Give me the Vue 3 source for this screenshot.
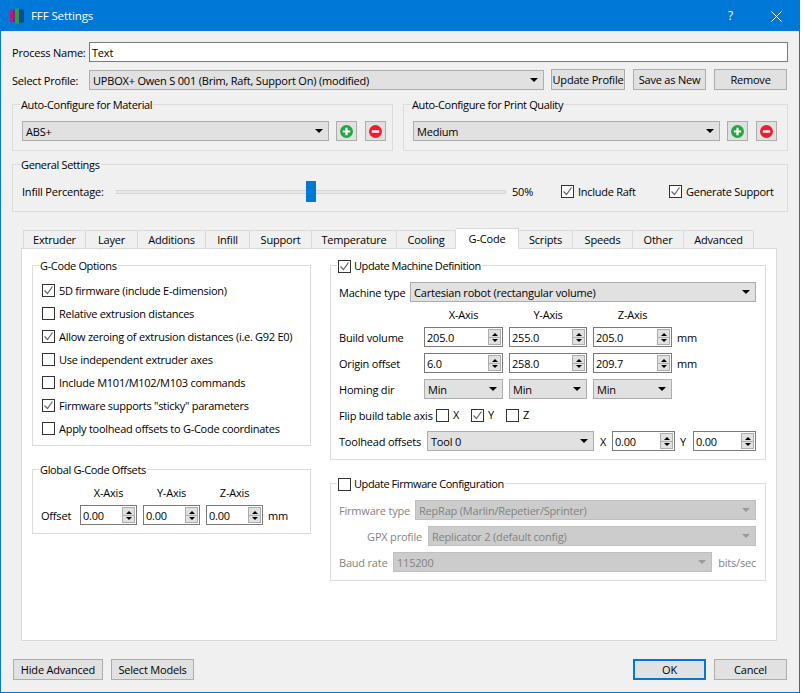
<script setup>
const tabs = ['Extruder', 'Layer', 'Additions', 'Infill', 'Support', 'Temperature', 'Cooling', 'G-Code', 'Scripts', 'Speeds', 'Other', 'Advanced']
const activeTab = 'G-Code'

const gcodeOptions = [
  { label: '5D firmware (include E-dimension)', checked: true },
  { label: 'Relative extrusion distances', checked: false },
  { label: 'Allow zeroing of extrusion distances (i.e. G92 E0)', checked: true },
  { label: 'Use independent extruder axes', checked: false },
  { label: 'Include M101/M102/M103 commands', checked: false },
  { label: 'Firmware supports "sticky" parameters', checked: true },
  { label: 'Apply toolhead offsets to G-Code coordinates', checked: false },
]

const axes = ['X-Axis', 'Y-Axis', 'Z-Axis']
const globalOffsets = ['0.00', '0.00', '0.00']
const buildVolume = ['205.0', '255.0', '205.0']
const originOffset = ['6.0', '258.0', '209.7']
const flipAxes = [
  { label: 'X', checked: false },
  { label: 'Y', checked: true },
  { label: 'Z', checked: false },
]
</script>

<template>
  <div class="window">
    <header class="titlebar">
      <svg class="logo" width="15" height="16" viewBox="0 0 15 16">
        <rect x="0" y="2" width="4" height="12" rx="1.5" fill="#c0187a" />
        <rect x="3" y="2" width="3" height="12" fill="#5b2fa0" />
        <rect x="5" y="0" width="4" height="16" rx="2" fill="#2fa040" />
        <rect x="9" y="1" width="5" height="14" rx="2" fill="#124a96" />
      </svg>
      <span class="title">FFF Settings</span>
      <span class="help">?</span>
      <svg class="close" width="11" height="11" viewBox="0 0 11 11">
        <path d="M0.5 0.5L10.5 10.5M10.5 0.5L0.5 10.5" stroke="#fff" stroke-width="1" fill="none" />
      </svg>
    </header>

    <main class="body">
      <div class="row name-row">
        <label class="row-label">Process Name:</label>
        <div class="line-edit">Text</div>
      </div>

      <div class="row profile-row">
        <label class="row-label">Select Profile:</label>
        <div class="combo profile-combo">
          <span>UPBOX+ Owen S 001 (Brim, Raft, Support On) (modified)</span><i class="arrow"></i>
        </div>
        <button class="btn update-btn">Update Profile</button>
        <button class="btn save-btn">Save as New</button>
        <button class="btn remove-btn">Remove</button>
      </div>

      <div class="auto-groups">
        <fieldset class="group top-group material-group">
          <legend>Auto-Configure for Material</legend>
          <div class="auto-row">
            <div class="combo"><span>ABS+</span><i class="arrow"></i></div>
            <button class="btn icon-btn add-btn">
              <svg width="13" height="13" viewBox="0 0 14 14"><circle cx="7" cy="7" r="7" fill="#22a83f" /><path d="M7 3v8M3 7h8" stroke="#fff" stroke-width="2.4" /></svg>
            </button>
            <button class="btn icon-btn">
              <svg width="13" height="13" viewBox="0 0 14 14"><circle cx="7" cy="7" r="7" fill="#ed1c2e" /><path d="M3 7h8" stroke="#fff" stroke-width="2.6" /></svg>
            </button>
          </div>
        </fieldset>
        <fieldset class="group top-group quality-group">
          <legend>Auto-Configure for Print Quality</legend>
          <div class="auto-row">
            <div class="combo"><span>Medium</span><i class="arrow"></i></div>
            <button class="btn icon-btn add-btn">
              <svg width="13" height="13" viewBox="0 0 14 14"><circle cx="7" cy="7" r="7" fill="#22a83f" /><path d="M7 3v8M3 7h8" stroke="#fff" stroke-width="2.4" /></svg>
            </button>
            <button class="btn icon-btn">
              <svg width="13" height="13" viewBox="0 0 14 14"><circle cx="7" cy="7" r="7" fill="#ed1c2e" /><path d="M3 7h8" stroke="#fff" stroke-width="2.6" /></svg>
            </button>
          </div>
        </fieldset>
      </div>

      <fieldset class="group top-group general-group">
        <legend>General Settings</legend>
        <div class="general-row">
          <span class="infill-label">Infill Percentage:</span>
          <div class="slider"><div class="track"></div><div class="handle"></div></div>
          <span class="percent">50%</span>
          <label class="check raft-check">
            <span class="box"><svg width="11" height="11" viewBox="0 0 11 11"><path d="M1.5 5.5L4.5 8.5L9.5 1.5" stroke="#666" stroke-width="1.2" fill="none" /></svg></span>Include Raft
          </label>
          <label class="check">
            <span class="box"><svg width="11" height="11" viewBox="0 0 11 11"><path d="M1.5 5.5L4.5 8.5L9.5 1.5" stroke="#666" stroke-width="1.2" fill="none" /></svg></span>Generate Support
          </label>
        </div>
      </fieldset>

      <nav class="tabs">
        <div v-for="tab in tabs" :key="tab" class="tab" :class="{ active: tab === activeTab }">{{ tab }}</div>
      </nav>

      <section class="pane">
        <div class="left-col">
          <fieldset class="group options-group">
            <legend>G-Code Options</legend>
            <label v-for="opt in gcodeOptions" :key="opt.label" class="check option">
              <span class="box">
                <svg v-if="opt.checked" width="11" height="11" viewBox="0 0 11 11"><path d="M1.5 5.5L4.5 8.5L9.5 1.5" stroke="#666" stroke-width="1.2" fill="none" /></svg>
              </span>{{ opt.label }}
            </label>
          </fieldset>

          <fieldset class="group offsets-group">
            <legend>Global G-Code Offsets</legend>
            <div class="offsets-grid">
              <span></span>
              <span v-for="axis in axes" :key="axis" class="axis">{{ axis }}</span>
              <span></span>
              <span>Offset</span>
              <div v-for="(val, i) in globalOffsets" :key="i" class="spin">
                <span class="spin-value">{{ val }}</span>
                <div class="spin-btns"><i class="up"></i><i class="down"></i></div>
              </div>
              <span class="unit">mm</span>
            </div>
          </fieldset>
        </div>

        <div class="right-col">
          <fieldset class="group machine-group">
            <legend>
              <label class="check">
                <span class="box"><svg width="11" height="11" viewBox="0 0 11 11"><path d="M1.5 5.5L4.5 8.5L9.5 1.5" stroke="#666" stroke-width="1.2" fill="none" /></svg></span>Update Machine Definition
              </label>
            </legend>
            <div class="row machine-type">
              <span class="type-label">Machine type</span>
              <div class="combo"><span>Cartesian robot (rectangular volume)</span><i class="arrow"></i></div>
            </div>

            <div class="machine-grid">
              <span></span>
              <span v-for="axis in axes" :key="axis" class="axis">{{ axis }}</span>
              <span></span>

              <span>Build volume</span>
              <div v-for="(val, i) in buildVolume" :key="i" class="spin">
                <span class="spin-value">{{ val }}</span>
                <div class="spin-btns"><i class="up"></i><i class="down"></i></div>
              </div>
              <span class="unit">mm</span>

              <span>Origin offset</span>
              <div v-for="(val, i) in originOffset" :key="i" class="spin">
                <span class="spin-value">{{ val }}</span>
                <div class="spin-btns"><i class="up"></i><i class="down"></i></div>
              </div>
              <span class="unit">mm</span>

              <span>Homing dir</span>
              <div v-for="axis in axes" :key="axis" class="combo"><span>Min</span><i class="arrow"></i></div>
              <span></span>
            </div>

            <div class="flip-row">
              <span class="flip-label">Flip build table axis</span>
              <label v-for="axis in flipAxes" :key="axis.label" class="check flip-check">
                <span class="box">
                  <svg v-if="axis.checked" width="11" height="11" viewBox="0 0 11 11"><path d="M1.5 5.5L4.5 8.5L9.5 1.5" stroke="#666" stroke-width="1.2" fill="none" /></svg>
                </span>{{ axis.label }}
              </label>
            </div>

            <div class="toolhead-row">
              <span class="toolhead-label">Toolhead offsets</span>
              <div class="combo"><span>Tool 0</span><i class="arrow"></i></div>
              <span class="tool-x">X</span>
              <div class="spin tool-spin">
                <span class="spin-value">0.00</span>
                <div class="spin-btns"><i class="up"></i><i class="down"></i></div>
              </div>
              <span class="tool-y">Y</span>
              <div class="spin tool-spin">
                <span class="spin-value">0.00</span>
                <div class="spin-btns"><i class="up"></i><i class="down"></i></div>
              </div>
            </div>
          </fieldset>

          <fieldset class="group firmware-group">
            <legend>
              <label class="check"><span class="box"></span>Update Firmware Configuration</label>
            </legend>
            <div class="fw-row">
              <span class="fw-type">Firmware type</span>
              <div class="combo disabled"><span>RepRap (Marlin/Repetier/Sprinter)</span><i class="arrow"></i></div>
            </div>
            <div class="fw-row">
              <span class="fw-gpx">GPX profile</span>
              <div class="combo disabled"><span>Replicator 2 (default config)</span><i class="arrow"></i></div>
            </div>
            <div class="fw-row">
              <span class="fw-baud">Baud rate</span>
              <div class="combo disabled"><span>115200</span><i class="arrow"></i></div>
              <span>bits/sec</span>
            </div>
          </fieldset>
        </div>
      </section>

      <footer class="footer">
        <button class="btn hide-btn">Hide Advanced</button>
        <button class="btn models-btn">Select Models</button>
        <span class="spacer"></span>
        <button class="btn ok-btn">OK</button>
        <button class="btn cancel-btn">Cancel</button>
      </footer>
    </main>
  </div>
</template>

<style scoped>
.window {
  width: 800px;
  height: 693px;
  box-sizing: border-box;
  display: flex;
  flex-direction: column;
  border: 1px solid #0078d7;
  background: #f0f0f0;
  color: #000;
  font-family: "Open Sans", sans-serif;
  font-size: 11px;
  letter-spacing: -0.2px;
  line-height: 14px;
  white-space: nowrap;
}

.titlebar {
  height: 30px;
  flex: none;
  display: flex;
  align-items: center;
  background: #0078d7;
  color: #fff;
  padding-left: 9px;
}
.logo {
  filter: blur(0.4px);
}
.title {
  margin-left: 6px;
  flex: 1;
  font-size: 11.5px;
  letter-spacing: -0.1px;
}
.help {
  margin-right: 38px;
  font-size: 12px;
}
.close {
  margin-right: 17px;
}

.body {
  flex: 1;
  min-height: 0;
  display: flex;
  flex-direction: column;
  padding: 11px 11px 12px;
}

.row {
  display: flex;
  align-items: center;
}
.row-label {
  width: 77px;
  flex: none;
}
/* the row labels and field values sit a pixel below centre */
.row-label,
.type-label,
.combo > span,
.spin-value,
.machine-grid > span:not(.axis),
.offsets-grid > span:not(.axis),
.fw-row > span,
.toolhead-row > span,
.flip-label {
  padding-top: 2px;
}
.line-edit {
  flex: 1;
  height: 20px;
  box-sizing: border-box;
  border: 1px solid #7a7a7a;
  background: #fff;
  padding-left: 2px;
  line-height: 20px;
}
.profile-row {
  margin-top: 7px;
}
.profile-combo {
  flex: 1;
  margin-right: 7px;
}

.btn {
  height: 21px;
  box-sizing: border-box;
  border: 1px solid #adadad;
  background: #e1e1e1;
  font: inherit;
  letter-spacing: inherit;
  color: #000;
  padding: 0;
  flex: none;
}
.update-btn { width: 74px; margin-right: 8px; }
.save-btn { width: 73px; margin-right: 8px; }
.remove-btn { width: 73px; margin-right: 1px; }

.combo {
  flex: 1;
  min-width: 0;
  height: 20px;
  box-sizing: border-box;
  display: flex;
  align-items: center;
  justify-content: space-between;
  border: 1px solid #adadad;
  background: #e1e1e1;
  padding: 0 5px 0 3px;
}
.arrow {
  width: 0;
  height: 0;
  border-left: 4px solid transparent;
  border-right: 4px solid transparent;
  border-top: 4px solid #000;
}
.combo.disabled {
  background: #cccccc;
  border-color: #bfbfbf;
  color: #838383;
}
.combo.disabled .arrow {
  border-top-color: #999;
}

.group {
  margin: 0;
  min-width: 0;
  border: 1px solid #dcdcdc;
  padding: 0;
}
.group legend {
  padding: 0 1px;
  margin-left: 6px;
  height: 14px;
  line-height: 16px;
  letter-spacing: -0.35px;
}
.top-group legend {
  margin-left: 7px;
}
.group legend .check {
  height: 16px;
  letter-spacing: -0.42px;
}
.group legend .box {
  margin-right: 3px;
}

.auto-groups {
  display: flex;
  gap: 10px;
  margin-top: 7px;
}
.material-group { width: 381px; box-sizing: border-box; flex: none; }
.quality-group { flex: 1; }
.auto-row {
  display: flex;
  align-items: center;
  padding: 10px 6px 9px 9px;
}
.quality-group .auto-row {
  padding-right: 10px;
}
.auto-row .combo {
  margin-right: 7px;
}
.icon-btn {
  width: 21px;
  height: 20px;
  display: flex;
  align-items: center;
  justify-content: center;
}
.add-btn {
  margin-right: 8px;
}

.general-group {
  margin-top: 6px;
}
.general-row {
  display: flex;
  align-items: center;
  height: 21px;
  padding: 10px 0 9px 9px;
}
.infill-label {
  width: 94px;
  flex: none;
}
.slider {
  position: relative;
  width: 390px;
  height: 21px;
  flex: none;
  display: flex;
  align-items: center;
}
.track {
  width: 100%;
  height: 4px;
  box-sizing: border-box;
  border: 1px solid #d6d6d6;
  background: #e7e7e7;
}
.handle {
  position: absolute;
  left: 190px;
  top: 0;
  width: 10px;
  height: 21px;
  background: #0078d7;
}
.percent {
  margin-left: 6px;
  width: 49px;
  flex: none;
}

.check {
  display: flex;
  align-items: center;
  letter-spacing: -0.27px;
}
.box {
  width: 13px;
  height: 13px;
  box-sizing: border-box;
  flex: none;
  display: flex;
  border: 1px solid #333;
  background: #fff;
  margin-right: 4px;
}
.raft-check {
  width: 108px;
  flex: none;
}

.tabs {
  display: grid;
  grid-template-columns: 63px 52px 68px 44px 62px 85px 59px 63px 54px 60px 51px 70px;
  align-items: end;
  height: 21px;
  margin: 16px 0 -1px 11px;
  position: relative;
  z-index: 1;
}
.tab {
  height: 19px;
  box-sizing: border-box;
  text-align: center;
  line-height: 18px;
  border: 1px solid #d9d9d9;
  border-left-width: 0;
  background: #f0f0f0;
}
.tab:first-child {
  border-left-width: 1px;
}
.tab.active {
  height: 21px;
  background: #fff;
  border-bottom-color: #fff;
  line-height: 20px;
}

.pane {
  flex: 1;
  min-height: 0;
  margin: 0 11px 0 9px;
  display: flex;
  gap: 19px;
  box-sizing: border-box;
  border: 1px solid #d9d9d9;
  background: #fff;
  padding: 9px 10px 0;
}
.left-col {
  width: 279px;
  flex: none;
}
.right-col {
  flex: 1;
  min-width: 0;
}

.option {
  height: 23px;
  margin-left: 9px;
}
.options-group {
  padding-top: 7px;
  padding-bottom: 5px;
}
.offsets-group {
  margin-top: 16px;
}
.offsets-grid {
  display: grid;
  grid-template-columns: 33px 57px 57px 57px auto;
  column-gap: 6px;
  row-gap: 5px;
  align-items: center;
  padding: 10px 0 8px 8px;
}
.axis {
  text-align: center;
}
.unit {
  margin-left: -1px;
}

.spin {
  height: 20px;
  box-sizing: border-box;
  display: flex;
  align-items: center;
  border: 1px solid #7a7a7a;
  background: #fff;
  padding: 1px 1px 1px 2px;
}
.spin-value {
  flex: 1;
}
.spin-btns {
  width: 13px;
  height: 16px;
  display: flex;
  flex-direction: column;
  flex: none;
  box-sizing: border-box;
  border: 1px solid #adadad;
  background: linear-gradient(#adadad, #adadad) center / 100% 1px no-repeat, #e1e1e1;
  align-items: center;
  justify-content: center;
  gap: 3px;
}
.up,
.down {
  width: 0;
  height: 0;
  border-left: 3px solid transparent;
  border-right: 3px solid transparent;
}
.up { border-bottom: 3px solid #000; }
.down { border-top: 3px solid #000; }

.machine-type {
  padding: 10px 9px 0 8px;
}
.type-label {
  width: 71px;
  flex: none;
}
.machine-grid {
  display: grid;
  grid-template-columns: 79px 79px 78px 79px auto;
  column-gap: 6px;
  row-gap: 6px;
  align-items: center;
  padding: 6px 0 0 8px;
}
.machine-grid .axis {
  margin-bottom: -1px;
}
.flip-row {
  display: flex;
  align-items: center;
  height: 14px;
  padding: 9px 0 0 8px;
}
.flip-label {
  width: 97px;
  flex: none;
}
.flip-check {
  width: 35px;
  flex: none;
}
.toolhead-row {
  display: flex;
  align-items: center;
  padding: 9px 9px 8px 8px;
}
.toolhead-label {
  width: 88px;
  flex: none;
}
.tool-x {
  width: 7px;
  margin: 0 5px 0 6px;
}
.tool-y {
  width: 7px;
  margin: 0 6px 0 5px;
}
.tool-spin {
  width: 63px;
  flex: none;
}

.firmware-group {
  margin-top: 16px;
  padding-top: 4px;
  padding-bottom: 8px;
}
.fw-row {
  display: flex;
  align-items: center;
  gap: 6px;
  margin-top: 6px;
  padding: 0 9px 0 8px;
  color: #838383;
}
.fw-type { width: 70px; flex: none; }
.fw-gpx { width: 83px; flex: none; text-align: right; }
.fw-baud { width: 48px; flex: none; }

.footer {
  display: flex;
  flex: none;
  margin: 18px 1px 0;
}
.hide-btn { width: 90px; margin-right: 8px; }
.models-btn { width: 83px; }
.spacer { flex: 1; }
.ok-btn {
  width: 73px;
  margin-right: 8px;
  border: 2px solid #0078d7;
}
.cancel-btn { width: 73px; }
</style>

<style>
body {
  background: #fff;
}
</style>
